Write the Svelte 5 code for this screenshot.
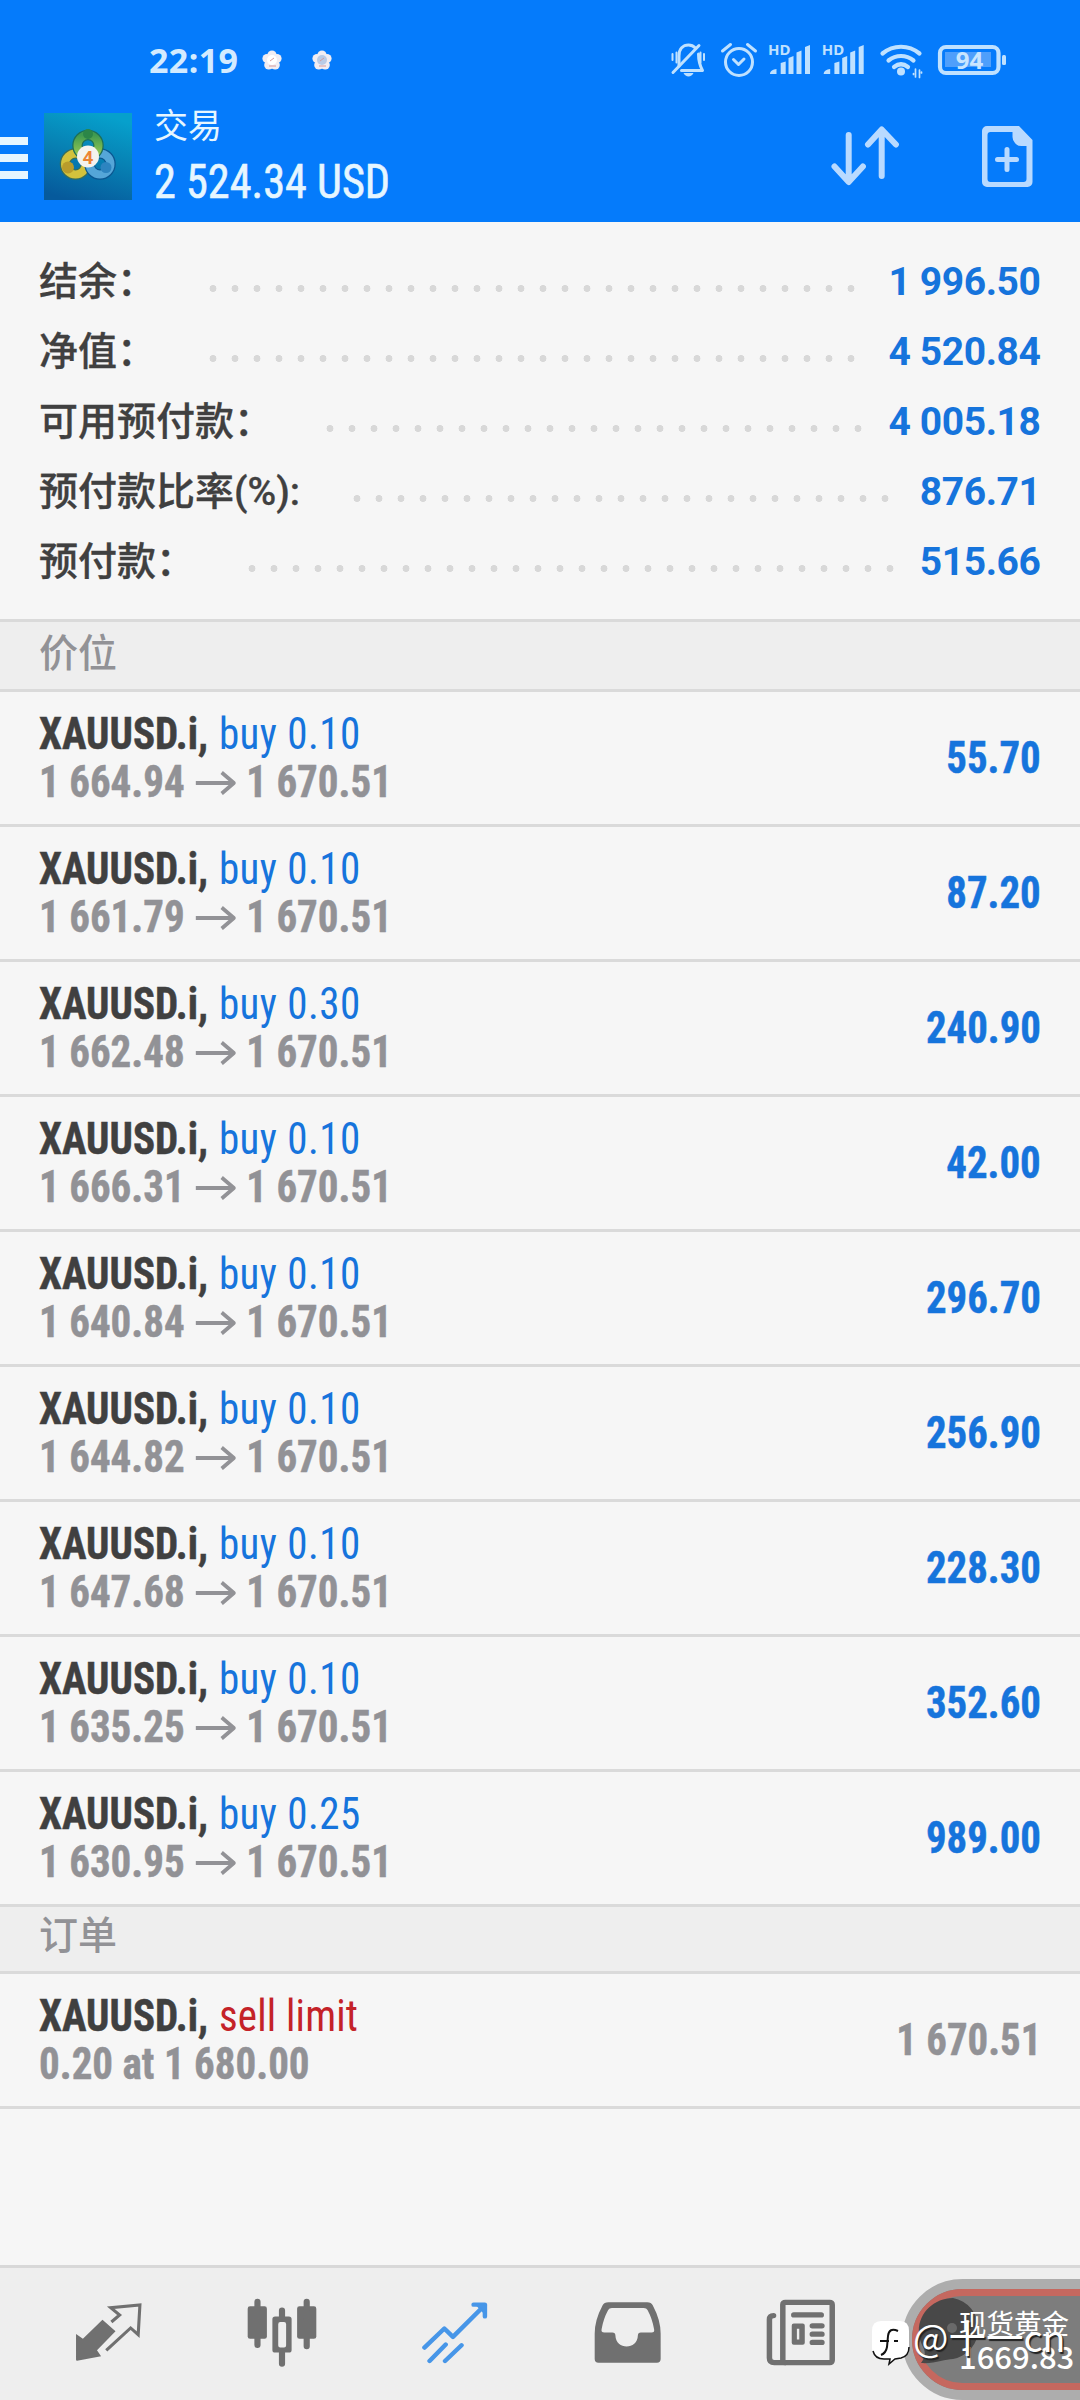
<script>
  const summary = [
    { label: '结余：', value: '1 996.50', dots: 30 },
    { label: '净值：', value: '4 520.84', dots: 30 },
    { label: '可用预付款：', value: '4 005.18', dots: 25 },
    { label: '预付款比率(%):', value: '876.71', dots: 25 },
    { label: '预付款：', value: '515.66', dots: 30 }
  ];

  const current = '1 670.51';

  const positions = [
    { volume: '0.10', open: '1 664.94', profit: '55.70' },
    { volume: '0.10', open: '1 661.79', profit: '87.20' },
    { volume: '0.30', open: '1 662.48', profit: '240.90' },
    { volume: '0.10', open: '1 666.31', profit: '42.00' },
    { volume: '0.10', open: '1 640.84', profit: '296.70' },
    { volume: '0.10', open: '1 644.82', profit: '256.90' },
    { volume: '0.10', open: '1 647.68', profit: '228.30' },
    { volume: '0.10', open: '1 635.25', profit: '352.60' },
    { volume: '0.25', open: '1 630.95', profit: '989.00' }
  ];
</script>

<div class="screen">
  <header>
    <div class="status">
      <span class="time">22:19</span>
      {#each ['#fff', '#b9cbe6'] as core}
        <svg class="flower" width="20" height="20" viewBox="0 0 20 20">
          <g fill="#f1edf2">
            <circle cx="10" cy="5" r="4.6" />
            <circle cx="15" cy="8.5" r="4.6" />
            <circle cx="13.2" cy="15" r="4.6" />
            <circle cx="6.8" cy="15" r="4.6" />
            <circle cx="5" cy="8.5" r="4.6" />
          </g>
          <circle cx="10" cy="10" r="5" fill={core} />
          <path d="M7 16h7M8 11l4-3" stroke="#d59a9c" stroke-width="1" />
        </svg>
      {/each}

      <!-- bell, alarm, two signals, wifi, battery -->
      <svg class="system" width="340" height="40" viewBox="668 40 340 40">
        <g fill="none" stroke="#bfe1ff" stroke-width="3" stroke-linecap="round" stroke-linejoin="round">
          <path d="M679 66v-10c0-7 4-11 9.500-11 3 0 5.500 1.500 7 3M698.500 54c0 7 1 11 4 16.500h-21" />
          <path d="M673 72.500L699 45.500" />
          <path d="M672.500 54v6M676.500 52.500v10M700.500 52.500v10M704 54v6" stroke-width="2" />
          <circle cx="739" cy="62" r="13.500" />
          <path d="M733.500 59.500l5 5 5.500-5.500M722.500 51l8-6.500M755.500 51l-8-6.500" />
        </g>
        <path d="M683.500 73h10c-2 4.500-8 4.500-10 0z" fill="#bfe1ff" />
        {#each [0, 53.7] as dx}
          <g transform="translate({dx} 0)" fill="#bfe1ff">
            <text class="hd" x="768" y="55">HD</text>
            <path d="M770 74c0-3 3-4.500 6.500-5v5zM780.700 63l5-1.500V74h-5zM788.500 58l5-2v18h-5zM796.500 52.500l5-2V74h-5zM805 47l5-2v29h-5z" />
          </g>
        {/each}
        <g fill="none" stroke="#bfe1ff" stroke-width="4.200" stroke-linecap="round">
          <path d="M882.500 53.500c11-9 26-9 37 0M888.500 60.500c7.500-6 17.500-6 25 0M894 67c4.500-3.500 9.500-3.500 14 0" />
          <path d="M915.500 69v8M919.500 70v7.500M913.500 73.500v1M921.500 72v1" stroke-width="1.700" />
        </g>
        <circle cx="901" cy="71.500" r="4" fill="#bfe1ff" />
        <rect x="945" y="52" width="46" height="15" fill="#4f9ffb" />
        <rect x="940" y="47" width="58.500" height="26" rx="6" fill="none" stroke="#bfe1ff" stroke-width="4.200" />
        <rect x="1002" y="55" width="4" height="10" rx="1.500" fill="#bfe1ff" />
        <text class="charge" x="969.500" y="69" text-anchor="middle">94</text>
      </svg>
    </div>

    <div class="appbar">
      <div class="burger"><i></i><i></i><i></i></div>
      <svg class="logo" width="88" height="87" viewBox="0 0 88 87">
        <defs>
          <linearGradient id="tile" x1="0.600" y1="0" x2="0.300" y2="1">
            <stop offset="0" stop-color="#06a0cc" />
            <stop offset="0.450" stop-color="#0782b4" />
            <stop offset="1" stop-color="#065a9c" />
          </linearGradient>
          <linearGradient id="green" x1="0" y1="0" x2="0" y2="1">
            <stop offset="0" stop-color="#3f9a50" />
            <stop offset="1" stop-color="#9ccb52" />
          </linearGradient>
        </defs>
        <rect width="88" height="87" fill="url(#tile)" />
        <g fill="none" stroke-width="8">
          <circle cx="31.500" cy="51" r="10.500" stroke="#376e5c" stroke-width="10.500" />
          <circle cx="31.500" cy="51" r="10.500" stroke="#d3c23c" />
          <circle cx="56" cy="51" r="10.500" stroke="#0b5791" stroke-width="10.500" />
          <circle cx="56" cy="51" r="10.500" stroke="#55a6d8" />
          <circle cx="44" cy="32.500" r="10.500" stroke="#1d6f58" stroke-width="10.500" />
          <circle cx="44" cy="32.500" r="10.500" stroke="url(#green)" />
        </g>
        <circle cx="44" cy="21" r="5" fill="#2c8648" />
        <circle cx="24" cy="54.500" r="6" fill="#b89c2c" />
        <circle cx="62" cy="54.500" r="5.500" fill="#2d84c0" />
        <circle cx="44" cy="43.500" r="11" fill="#f4f3ee" />
        <text class="four" x="44" y="50.500" text-anchor="middle">4</text>
      </svg>
      <div class="title">
        <div class="name">交易</div>
        <div class="total">2 524.34 USD</div>
      </div>
      <svg class="sort" width="70" height="62" viewBox="831 125 70 62" fill="none" stroke="#b9daff" stroke-width="6" stroke-linecap="round" stroke-linejoin="round">
        <path d="M848.700 135v46M834.500 166.500l14.200 15.500 14.200-15.500M881.700 176v-46M868 144.500l13.700-15 14.200 15" />
      </svg>
      <svg class="add" width="52" height="64" viewBox="982 124 52 64">
        <path
          d="M988 125h32l13.500 14v42a5 5 0 0 1-5 5H988a5 5 0 0 1-5-5v-51a5 5 0 0 1 5-5zm3.500 6a3 3 0 0 0-3 3v44a3 3 0 0 0 3 3h33a3 3 0 0 0 3-3v-33h-5a9 9 0 0 1-9-9v-5z"
          fill="#b9daff"
          fill-rule="evenodd"
        />
        <path d="M998.500 158.500h19M1008 148.500v20" stroke="#b9daff" stroke-width="5" stroke-linecap="round" />
      </svg>
    </div>
  </header>

  <section class="summary">
    {#each summary as item}
      <div class="line">
        <span class="label">{item.label}</span>
        <span class="dots" style="width: {item.dots * 22}px"></span>
        <span class="amount">{item.value}</span>
      </div>
    {/each}
  </section>

  <h2>价位</h2>
  {#each positions as p}
    <div class="row">
      <div class="info">
        <div><b>XAUUSD.i,</b> <span class="buy">buy {p.volume}</span></div>
        <div class="sub">
          <span>{p.open}</span>
          <svg width="43" height="26" viewBox="0 0 43 26" fill="none" stroke="#929296" stroke-width="4">
            <path d="M0 14h41M28 3.500L41 14 28 24.500" />
          </svg>
          <span>{current}</span>
        </div>
      </div>
      <div class="profit">{p.profit}</div>
    </div>
  {/each}

  <h2 class="orders">订单</h2>
  <div class="row">
    <div class="info">
      <div><b>XAUUSD.i,</b> <span class="sell">sell limit</span></div>
      <div class="sub"><span>0.20 at 1 680.00</span></div>
    </div>
    <div class="profit pending">{current}</div>
  </div>

  <nav>
    <div class="tab">
      <svg width="68" height="60" viewBox="216 157 198 180" preserveAspectRatio="none">
        <path d="M219 253l20 14 57-57 38 35-54 57 12 18-70 13q-3 0-3-3z" fill="#707070" />
        <path d="M322 217l24-21-26-22 85-8-5 89-22-20-71 67" fill="none" stroke="#707070" stroke-width="9" />
      </svg>
    </div>
    <div class="tab">
      <svg width="70" height="69" viewBox="714 143 204 206" preserveAspectRatio="none">
        <g fill="#707070">
          <rect x="716" y="168" width="56" height="97" rx="7" />
          <rect x="860" y="168" width="56" height="97" rx="7" />
          <path d="M796 198h40q8 0 8 8v92q0 8-8 8h-40q-8 0-8-8v-92q0-8 8-8zm15 17q-6 0-6 6v64q0 6 6 6h11q6 0 6-6v-64q0-6-6-6z" fill-rule="evenodd" />
        </g>
        <path d="M744.500 154v129M888 154v133M816 180v20M816 305v34" stroke="#707070" stroke-width="18" stroke-linecap="round" />
      </svg>
    </div>
    <div class="tab">
      <svg width="66" height="63" viewBox="1223 148 192 188" preserveAspectRatio="none" fill="none" stroke="#4796e8" stroke-width="13" stroke-linecap="round" stroke-linejoin="round">
        <path d="M1230 287l58-57 25 25 93-95M1373 159h33v35M1245 327l47-49M1290 327l48-47" />
        <path d="M1382 160l24 0v26z" fill="#4796e8" stroke-width="5" />
      </svg>
    </div>
    <div class="tab">
      <svg width="67" height="61" viewBox="157 151 194 184" preserveAspectRatio="none">
        <path
          d="M199 152h112q12 0 16 9 23 45 23 85v77q0 11-11 11H170q-11 0-11-11v-77q0-40 23-85 4-9 17-9zm10 17q-8 0-11 6-14 27-19 58-2 10 8 10h23q9 0 9 9c1 44 64 44 65 0q0-9 9-9h31q9 0 7-10-5-31-19-58-3-6-11-6z"
          fill="#707070"
          fill-rule="evenodd"
        />
      </svg>
    </div>
    <div class="tab">
      <svg width="70" height="67" viewBox="657 142 204 202" preserveAspectRatio="none" fill="none" stroke="#707070" stroke-width="16" stroke-linecap="round">
        <rect x="706" y="152" width="144" height="182" rx="7" />
        <path d="M679 192q-12 0-12 12v116q0 14 14 14h30" />
        <path d="M738 190h80M792 223h28M792 248h28M792 273h28" />
        <path d="M738 216h26q6 0 6 6v52q0 6-6 6h-26q-6 0-6-6v-52q0-6 6-6zm9 16v32h7v-32z" fill="#707070" fill-rule="evenodd" stroke="none" />
      </svg>
    </div>
  </nav>

  <!-- floating quote pill, hangs over the right edge of the tab bar -->
  <div class="quote">
    <svg class="bubble" width="74" height="72" viewBox="0 0 74 72">
      <path d="M4 66c3-4 5-8 3-14C-8 26 12 1 36 1a31 31 0 0 1 0 61c-8 0-18 5-32 4z" fill="#484848" />
      <circle cx="35" cy="31" r="5" fill="#6a6a6a" />
    </svg>
    <div class="quote-text">
      <div class="metal">现货黄金</div>
      <div class="rate">1669.83</div>
    </div>
  </div>
  <div class="mark">
    <svg width="40" height="48" viewBox="0 0 40 48">
      <path d="M10 1h19q9 0 9 10v17q0 8-7 10l-6 1-6 5 1-5h-9Q1 38 1 28V11Q1 1 10 1z" fill="#fff" />
      <path d="M2 31q2 8 11 8h6l-1 5 6-5 6-1q8-2 8-11" fill="none" stroke="#111" stroke-width="1.500" />
      <path d="M27 11q-9-4-10 5l-1 11q-1 6-6 8M9 21h9M23 21h4" fill="none" stroke="#111" stroke-width="2" />
    </svg>
    <span>@十一cn</span>
  </div>
</div>

<style>
  :global(body) {
    background: #f6f6f6;
  }

  .screen {
    position: relative;
    display: flex;
    flex-direction: column;
    width: 1080px;
    height: 2400px;
    overflow: hidden;
    background: #f6f6f6;
    color: #404040;
    font-family: Roboto, 'Noto Sans CJK SC', sans-serif;
  }

  header {
    height: 222px;
    background: #057bfb;
    color: #e6f6ff;
    flex: none;
  }

  .status {
    display: flex;
    align-items: center;
    height: 120px;
    padding-left: 149px;
    box-sizing: border-box;
  }

  .time {
    width: 113px;
    font: 700 34px/40px 'Noto Sans', sans-serif;
    letter-spacing: 0.4px;
    color: #d3ebff;
  }

  .flower {
    margin-right: 30px;
  }

  .system {
    margin-left: 306px;
  }

  .hd {
    font: 700 15px 'Noto Sans', sans-serif;
  }

  .charge {
    font: 700 24px 'Noto Sans', sans-serif;
    fill: #c9e6ff;
  }

  .appbar {
    display: flex;
    height: 102px;
    margin-top: -16px;
  }

  .burger {
    display: flex;
    flex-direction: column;
    gap: 9.500px;
    width: 27.500px;
    padding-top: 33px;
  }

  .burger i {
    height: 7.500px;
    background: #e6f6ff;
  }

  .logo {
    margin: 8.500px 0 0 16.500px;
  }

  .four {
    font: 700 19px Roboto, sans-serif;
    fill: #ec8434;
  }

  .title {
    width: 677px;
    margin-left: 22px;
  }

  .name {
    font: 400 34px/40px 'Noto Sans CJK SC', sans-serif;
  }

  .total {
    margin-top: 10px;
    font-size: 48px;
    line-height: 56px;
    font-stretch: 75%;
    -webkit-text-stroke: 0.6px currentColor;
    transform: scaleX(0.922);
    transform-origin: left;
  }

  .sort {
    margin-top: 21px;
  }

  .add {
    margin: 21px 0 0 80px;
  }

  .summary {
    height: 397px;
    padding: 25px 39.500px 0 39px;
    box-sizing: border-box;
    flex: none;
  }

  .line {
    display: flex;
    align-items: baseline;
    height: 70px;
    line-height: 70px;
    font-size: 39px;
  }

  .label {
    font-weight: 500;
    margin-right: 46px;
    -webkit-text-stroke: 0.3px currentColor;
  }

  .dots {
    height: 7px;
    align-self: center;
    margin-top: 12px;
    background: radial-gradient(circle, #d8d8d8 3.200px, transparent 3.700px) 0 0 / 22px 7px;
  }

  .amount {
    margin-left: auto;
    font-weight: 700;
    letter-spacing: -0.4px;
    color: #1674dc;
  }

  h2 {
    height: 67px;
    margin: 0;
    padding-left: 39px;
    border-top: 3px solid #dadada;
    border-bottom: 3px solid #dadada;
    background: #eee;
    color: #929296;
    font: 500 39px/57px 'Noto Sans CJK SC', sans-serif;
    flex: none;
  }

  h2.orders {
    height: 64px;
    border-top: 0;
    line-height: 50px;
  }

  .row {
    display: flex;
    justify-content: space-between;
    align-items: center;
    height: 135px;
    padding: 0 39px;
    box-sizing: border-box;
    border-bottom: 3px solid #dadada;
    font-size: 44px;
    line-height: 48px;
    font-stretch: 75%;
    flex: none;
  }

  /* prices are set narrower than the condensed width goes */
  .info {
    transform: scaleX(0.932);
    transform-origin: left;
  }

  .info b,
  .sub,
  .profit {
    -webkit-text-stroke: 0.5px currentColor;
  }

  .buy {
    margin-left: 1.500px;
    letter-spacing: 0.5px;
    color: #1674dc;
  }

  .sell {
    margin-left: 1.500px;
    letter-spacing: 0.2px;
    color: #c42228;
  }

  .sub {
    display: flex;
    align-items: center;
    gap: 11.500px;
    font-weight: 700;
    color: #929296;
  }

  .profit {
    font-weight: 700;
    color: #1674dc;
    transform: scaleX(0.928);
    transform-origin: right;
  }

  .pending {
    color: #929296;
  }

  nav {
    display: flex;
    height: 135px;
    margin-top: auto;
    padding-left: 22px;
    box-sizing: border-box;
    border-top: 3px solid #d8d8d8;
    background: #eee;
  }

  .tab {
    display: flex;
    justify-content: center;
    align-items: center;
    width: 173px;
    height: 128px;
  }

  .quote {
    position: absolute;
    left: 902px;
    top: 2279px;
    width: 240px;
    height: 121px;
    box-sizing: border-box;
    border: 10px solid #adadad;
    border-radius: 61px;
    background: #7d7d7d;
  }

  .quote::before {
    content: '';
    position: absolute;
    inset: 0;
    border: 7px solid #c5685f;
    border-radius: 51px;
  }

  .bubble {
    position: absolute;
    left: 5px;
    top: 8px;
  }

  .quote-text {
    position: absolute;
    left: 47px;
    top: 15px;
    color: #fff;
  }

  .metal {
    font: 400 27.500px/36px 'Noto Sans CJK SC', sans-serif;
  }

  .rate {
    font: 500 31px/36px 'Noto Sans CJK SC', sans-serif;
    margin-top: -2px;
  }

  .mark {
    position: absolute;
    left: 871px;
    top: 2320px;
    display: flex;
    align-items: flex-start;
    color: #fff;
    font: 400 37.500px/32px 'Noto Sans CJK SC', sans-serif;
    text-shadow: 1.500px 1.500px 1px #222;
  }

  .mark span {
    margin-left: 2px;
  }
</style>
